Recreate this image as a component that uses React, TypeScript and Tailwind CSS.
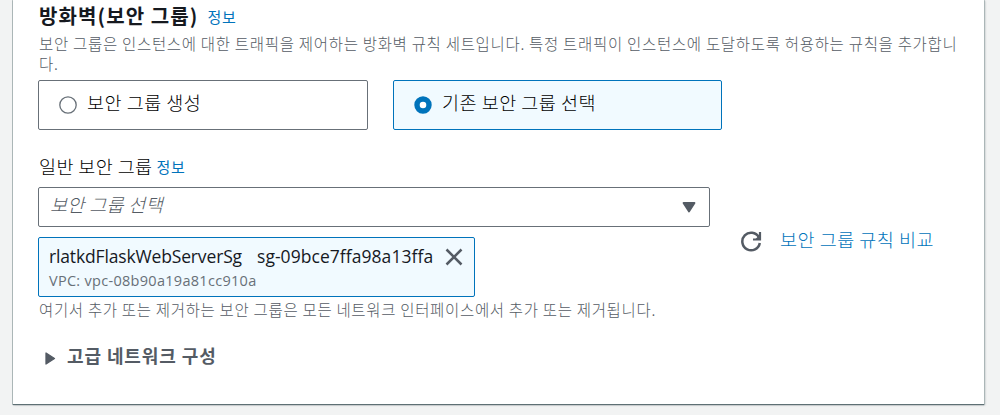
import type { ReactNode } from "react";

const KR = "font-['Noto_Sans_CJK_KR',sans-serif]";
const EN = "font-['Open_Sans','Noto_Sans',sans-serif]";

function InfoLink({ className }: { className: string }) {
  return <a className={`text-[#0073bb] ${className}`}>정보</a>;
}

function RadioTile({ selected, children }: { selected?: boolean; children: ReactNode }) {
  return (
    <label
      className={`flex h-[50px] items-start rounded-[2px] border pl-[20px] ${
        selected ? "w-[329px] border-[#0073bb] bg-[#f1faff]" : "w-[330px] border-[#687078] bg-white"
      }`}
    >
      <svg viewBox="0 0 18 18" className="mt-[15px] size-[18px] shrink-0">
        {selected ? (
          <circle cx="9" cy="9" r="6" fill="#fff" stroke="#0073bb" strokeWidth="5.4" />
        ) : (
          <circle cx="9" cy="9" r="8.2" fill="#fff" stroke="#687078" strokeWidth="1.3" />
        )}
      </svg>
      <span className="ml-[10px] mt-[8px] text-[18.5px] font-light leading-[26px] tracking-[0.5px] whitespace-nowrap text-black">
        {children}
      </span>
    </label>
  );
}

export default function App() {
  return (
    <div className={`h-[415px] overflow-hidden bg-[#f2f3f3] pl-[13px] text-[#16191f] ${KR}`}>
      <section className="h-[404px] w-[971px] bg-white pl-[25px] shadow-[0_1px_1px_0_rgba(0,28,36,0.5),0_0_0_1px_#bcc5c5,1px_1px_2px_rgba(0,28,36,0.3)]">
        <h2 className="flex h-[34px] items-start whitespace-nowrap">
          <span className="ml-px mt-[2px] text-[20px] font-bold leading-[28px] tracking-[1.1px]">방화벽(보안 그룹)</span>
          <InfoLink className="ml-[9px] mt-[5px] text-[15px] leading-[24px] tracking-[0.8px]" />
        </h2>
        <p className="mt-[-1px] ml-px h-[47px] text-[15.5px] font-light leading-[20px] tracking-[0.69px] text-[#545b64]">
          <span className="block h-[20px] whitespace-nowrap">
            보안 그룹은 인스턴스에 대한 트래픽을 제어하는 방화벽 규칙 세트입니다. 특정 트래픽이 인스턴스에 도달하도록 허용하는 규칙을 추가합니
          </span>
          <span className="block h-[20px]">다.</span>
        </p>
        <div className="flex gap-[25px]">
          <RadioTile>보안 그룹 생성</RadioTile>
          <RadioTile selected>기존 보안 그룹 선택</RadioTile>
        </div>

        <div className="flex">
          <div className="w-[672px]">
            <div className="flex h-[57px] items-start pt-[23px] whitespace-nowrap">
              <span className="ml-px text-[18.5px] font-light leading-[26px] tracking-[0.4px] text-black">일반 보안 그룹</span>
              <InfoLink className="ml-[4px] mt-[2px] text-[15px] leading-[24px] tracking-[0.8px]" />
            </div>
            <div className="flex h-[40px] items-start justify-between rounded-[2px] border border-[#687078] pl-[11px] pr-[13px]">
              <span className="mt-[3px] text-[18.5px] font-light italic leading-[26px] tracking-[0.35px] text-[#545b64]">
                보안 그룹 선택
              </span>
              <svg viewBox="0 0 13 11" className="mt-[14px] h-[11px] w-[14px]">
                <path d="M1 1h11L6.500 9.500z" fill="#545b64" stroke="#545b64" strokeWidth="1.800" strokeLinejoin="round" />
              </svg>
            </div>
            <div
              className={`mt-[10px] flex h-[60px] w-[437px] items-start rounded-[2px] border border-[#0073bb] bg-[#f1faff] pl-[10px] ${EN}`}
            >
              <div className="w-[394px] whitespace-nowrap">
                <div className="flex h-[32px] pt-[6px] text-[17.5px] leading-[24px]">
                  <span className="w-[208px] tracking-[-0.15px]">rlatkdFlaskWebServerSg</span>
                  <span className="tracking-[0.05px] [font-variant-ligatures:none]">sg-09bce7ffa98a13ffa</span>
                </div>
                <div className="text-[14.5px] leading-[22px] tracking-[0.29px] text-[#687078]">
                  VPC: vpc-08b90a19a81cc910a
                </div>
              </div>
              <svg viewBox="0 0 18 18" className="mt-[10px] ml-[2px] size-[18px]">
                <path d="M1.500 1.500l15 15M16.500 1.500l-15 15" stroke="#545b64" strokeWidth="2.500" />
              </svg>
            </div>
            <p className="mt-[2px] ml-px text-[15.5px] font-light leading-[20px] tracking-[0.67px] whitespace-nowrap text-[#545b64]">
              여기서 추가 또는 제거하는 보안 그룹은 모든 네트워크 인터페이스에서 추가 또는 제거됩니다.
            </p>
          </div>
          <div className="flex items-start pt-[96px] pl-[30px]">
            <svg viewBox="0 0 22 22" className="mt-[5px] size-[22px]">
              <path d="M18.800 6.200A8.800 8.800 0 1 0 19.800 12" fill="none" stroke="#545b64" strokeWidth="2.500" />
              <path d="M20 1v7.500h-7" fill="none" stroke="#545b64" strokeWidth="2.200" />
              <path d="M20 3.500v5h-5z" fill="#545b64" />
            </svg>
            <a className="ml-[18px] text-[18.5px] font-light leading-[26px] tracking-[0.5px] whitespace-nowrap text-[#0073bb]">
              보안 그룹 규칙 비교
            </a>
          </div>
        </div>

        <div className="mt-[23px] flex items-start pl-[7px] text-[#545b64]">
          <svg viewBox="0 0 11 13" className="mt-[10px] h-[13px] w-[11px]">
            <path d="M1 1v11l8.500-5.500z" fill="currentColor" stroke="currentColor" strokeWidth="1.300" strokeLinejoin="round" />
          </svg>
          <span className="ml-[11px] text-[18px] font-bold leading-[26px] tracking-[0.9px]">고급 네트워크 구성</span>
        </div>
      </section>
    </div>
  );
}
